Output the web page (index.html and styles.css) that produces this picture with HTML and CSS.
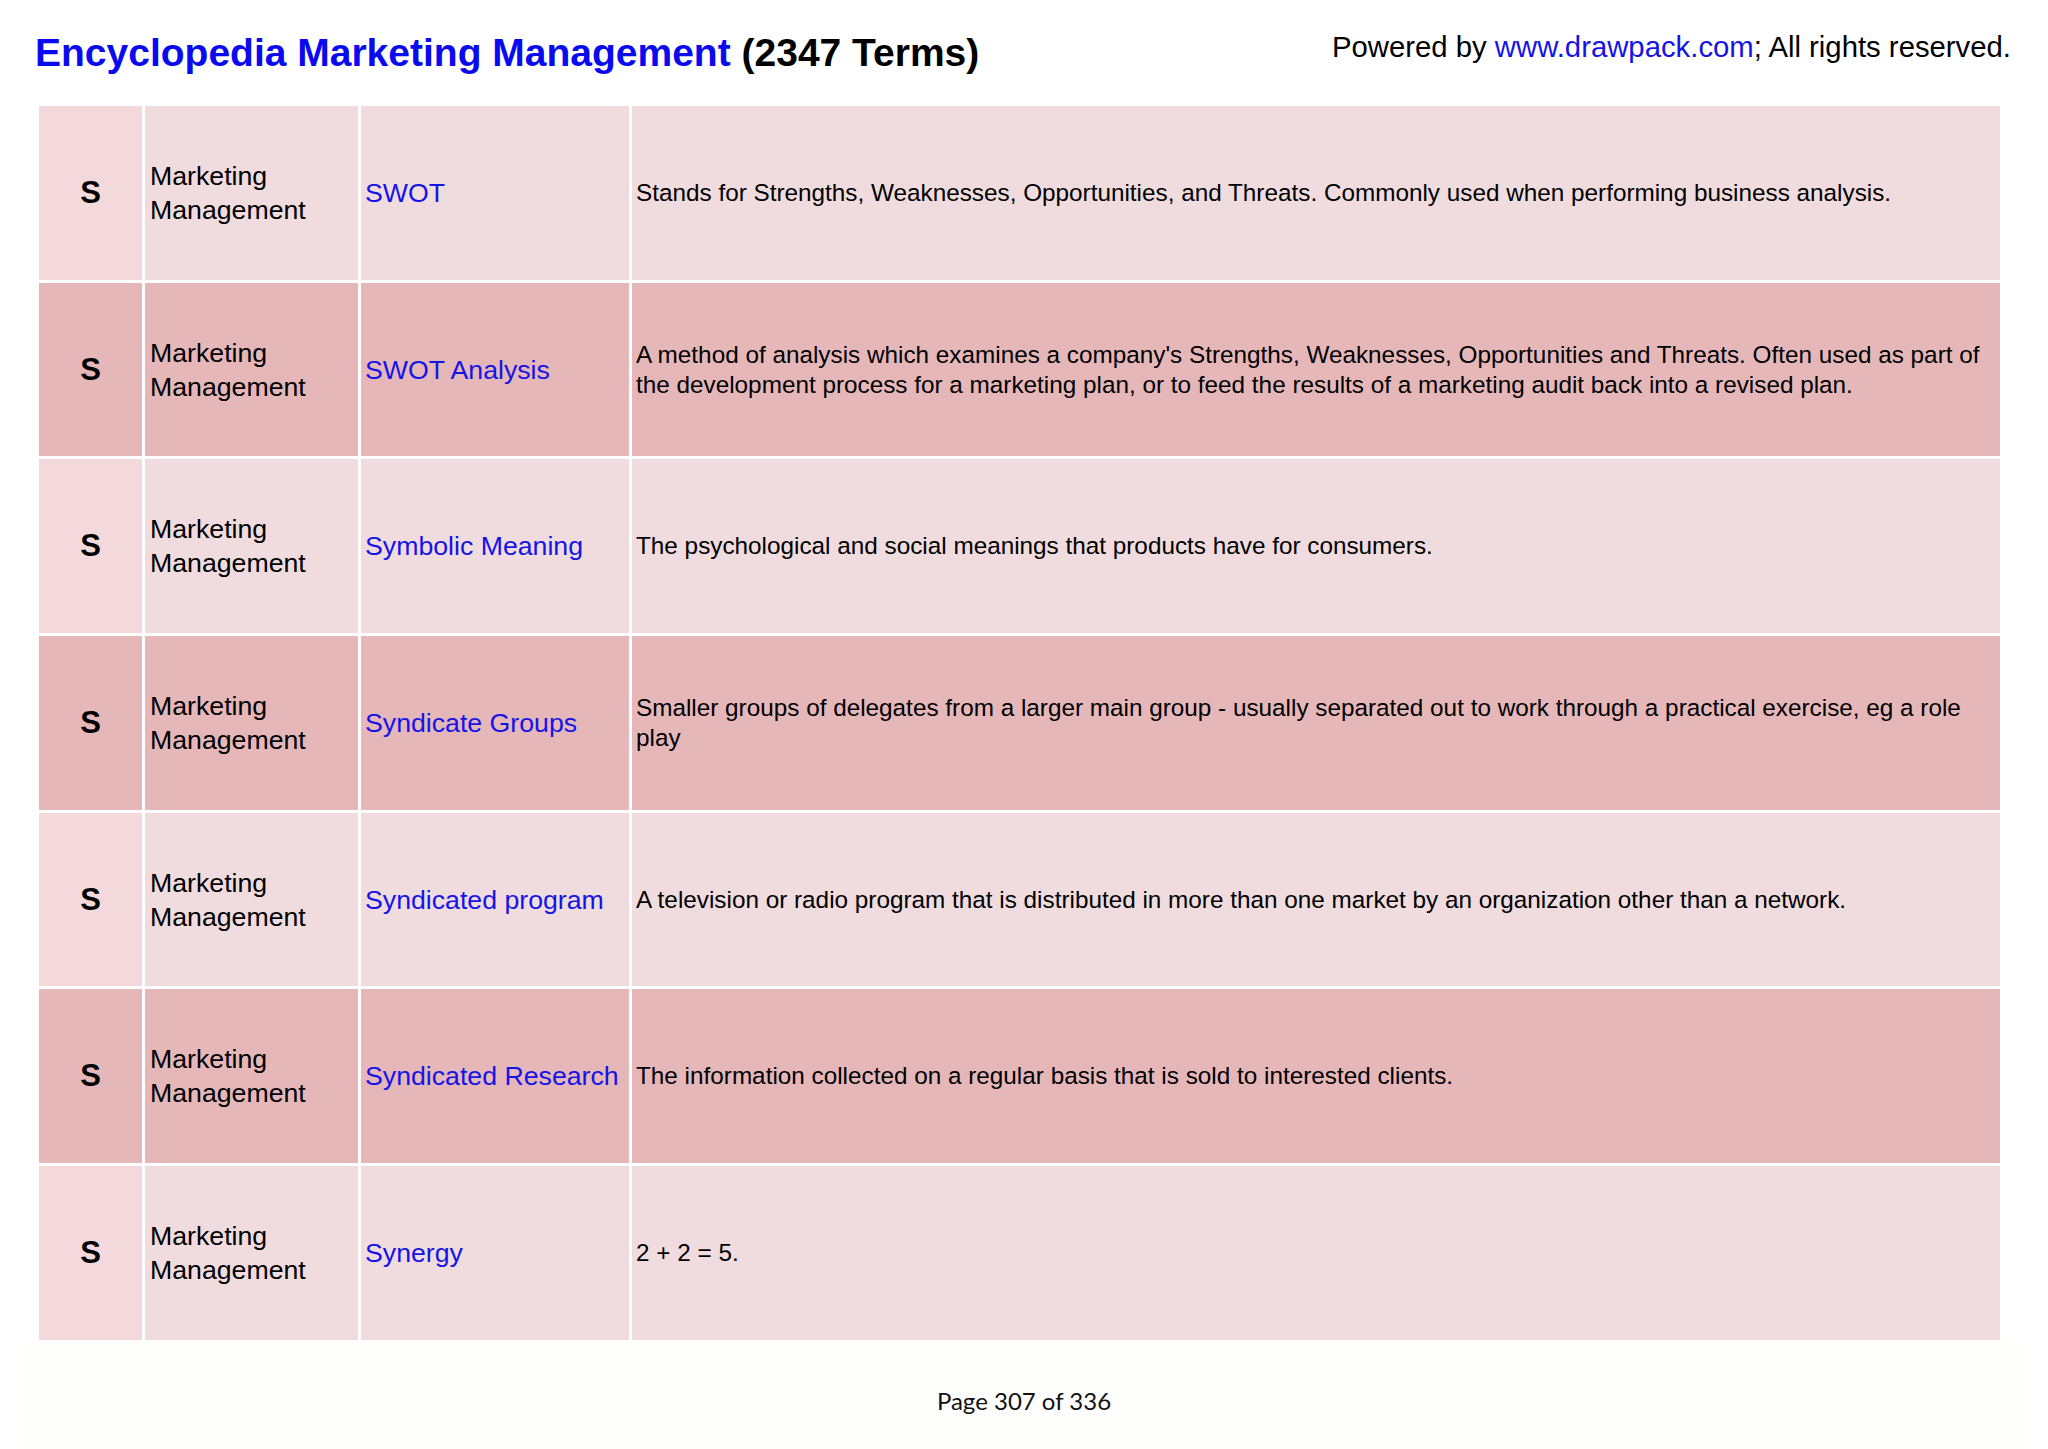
FILE: index.html
```html
<!DOCTYPE html>
<html lang="en">
<head>
<meta charset="utf-8">
<title>Encyclopedia Marketing Management</title>
<link rel="stylesheet" href="styles.css">
</head>
<body>
<div class="page">
  <header class="header">
    <h1 class="title"><span class="title-blue">Encyclopedia Marketing Management</span> (2347 Terms)</h1>
    <div class="powered">Powered by <span class="link">www.drawpack.com</span>; All rights reserved.</div>
  </header>

  <div class="table">
    <div class="row light">
      <div class="cell letter">S</div>
      <div class="cell cat">Marketing<br>Management</div>
      <div class="cell term">SWOT</div>
      <div class="cell desc">Stands for Strengths, Weaknesses, Opportunities, and Threats. Commonly used when performing business analysis.</div>
    </div>
    <div class="row dark">
      <div class="cell letter">S</div>
      <div class="cell cat">Marketing<br>Management</div>
      <div class="cell term">SWOT Analysis</div>
      <div class="cell desc">A method of analysis which examines a company's Strengths, Weaknesses, Opportunities and Threats. Often used as part of the development process for a marketing plan, or to feed the results of a marketing audit back into a revised plan.</div>
    </div>
    <div class="row light">
      <div class="cell letter">S</div>
      <div class="cell cat">Marketing<br>Management</div>
      <div class="cell term">Symbolic Meaning</div>
      <div class="cell desc">The psychological and social meanings that products have for consumers.</div>
    </div>
    <div class="row dark">
      <div class="cell letter">S</div>
      <div class="cell cat">Marketing<br>Management</div>
      <div class="cell term">Syndicate Groups</div>
      <div class="cell desc">Smaller groups of delegates from a larger main group - usually separated out to work through a practical exercise, eg a role play</div>
    </div>
    <div class="row light">
      <div class="cell letter">S</div>
      <div class="cell cat">Marketing<br>Management</div>
      <div class="cell term">Syndicated program</div>
      <div class="cell desc">A television or radio program that is distributed in more than one market by an organization other than a network.</div>
    </div>
    <div class="row dark">
      <div class="cell letter">S</div>
      <div class="cell cat">Marketing<br>Management</div>
      <div class="cell term">Syndicated Research</div>
      <div class="cell desc">The information collected on a regular basis that is sold to interested clients.</div>
    </div>
    <div class="row light">
      <div class="cell letter">S</div>
      <div class="cell cat">Marketing<br>Management</div>
      <div class="cell term">Synergy</div>
      <div class="cell desc">2 + 2 = 5.</div>
    </div>
  </div>

  <footer class="footer">Page 307 of 336</footer>
</div>
</body>
</html>
```

FILE: styles.css
```css
html, body {
  margin: 0;
  padding: 0;
  background: #ffffff;
}

.page {
  width: 2048px;
  height: 1449px;
  display: flex;
  flex-direction: column;
  font-family: "Liberation Sans", Arial, sans-serif;
  color: #000000;
}

.header {
  display: flex;
  justify-content: space-between;
  align-items: flex-start;
  padding: 30px 37px 0 35px;
  height: 75px;
  box-sizing: border-box;
  margin-bottom: 31px;
}

.title {
  margin: 0;
  font-size: 39px;
  line-height: 46px;
  font-weight: bold;
  color: #000000;
}

.title-blue {
  color: #0a0af0;
}

.powered {
  font-size: 29.3px;
  line-height: 34px;
  color: #000000;
}

.link {
  color: #1414e6;
}

.table {
  margin-left: 39px;
  width: 1961px;
  display: grid;
  grid-auto-rows: 173.7px;
  row-gap: 3px;
}

.row {
  display: grid;
  grid-template-columns: 103px 213px 268px 1fr;
  column-gap: 3px;
  background: #ffffff;
}

.cell {
  display: flex;
  align-items: center;
  box-sizing: border-box;
  padding: 0 10px 0 5px;
}

.light .cell {
  background: #f0dcde;
}

.light .letter {
  background: #f3d9dc;
}

.dark .cell {
  background: #e6b7b9;
}

.letter {
  justify-content: center;
  padding: 0;
  font-weight: bold;
  font-size: 31px;
}

.cat {
  font-size: 26.7px;
  line-height: 34px;
}

.term {
  font-size: 26.7px;
  line-height: 34px;
  color: #1414e6;
  padding-left: 4px;
  padding-right: 2px;
  white-space: nowrap;
}

.desc {
  font-size: 24.3px;
  line-height: 30px;
  padding-left: 4px;
  padding-right: 10px;
}

.footer {
  flex: 1;
  margin-left: 23px;
  margin-right: 23px;
  background: #fefefd;
  text-align: center;
  font-family: Lato, "Open Sans", sans-serif;
  font-size: 24px;
  line-height: 30px;
  padding-top: 46px;
  box-sizing: border-box;
  color: #111111;
}
```
